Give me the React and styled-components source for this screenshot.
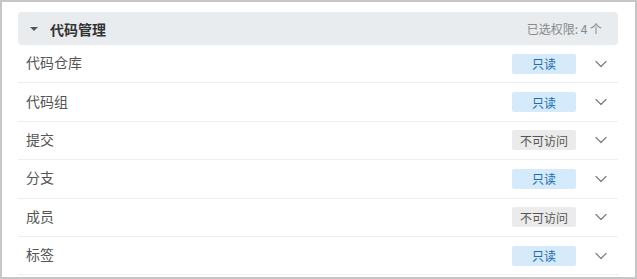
import React from 'react';
import styled, { createGlobalStyle } from 'styled-components';
import { ChevronDown } from 'lucide-react';

const GlobalStyle = createGlobalStyle`
	body {
		margin: 0;
		font-family: "Noto Sans CJK SC", "Liberation Sans", sans-serif;
	}
`

const Frame = styled.div`
	box-sizing: border-box;
	width: 637px;
	height: 279px;
	border: 2px solid #c6c6c6;
	padding: 10px 17px 0 16px;
	background: #fff;
	overflow: hidden;
`

const Header = styled.div`
	display: flex;
	align-items: center;
	height: 33px;
	padding: 0 16px 0 10px;
	background: #e9ecef;
	border-radius: 4px;
`

const Caret = styled.span`
	width: 0;
	height: 0;
	border-left: 4px solid transparent;
	border-right: 4px solid transparent;
	border-top: 4px solid #555;
	margin: 1px 12px 0 2px;
`

const Title = styled.h3`
	flex: 1;
	margin: 0;
	font-size: 14px;
	font-weight: 700;
	color: #333;
`

const Count = styled.span`
	font-size: 12px;
	color: #888;
`

const Row = styled.div`
	display: flex;
	align-items: center;
	height: 37.4px;
	padding: 0 7px 0 8px;
	border-bottom: 1px solid #eeeeee;

	&:first-of-type {
		height: 38px;
	}
`

const Name = styled.span`
	flex: 1;
	font-size: 14px;
	color: #555;
	margin-top: -3px;
`

const Badge = styled.span`
	box-sizing: border-box;
	width: 64px;
	height: 20px;
	display: flex;
	align-items: center;
	justify-content: center;
	font-size: 12px;
	border-radius: 2px;
	background: ${p => p.$blocked ? '#ebebeb' : '#d5eafb'};
	color: ${p => p.$blocked ? '#555' : '#1a6db0'};
`

const Toggle = styled.span`
	display: flex;
	margin-left: 15px;
	color: #808080;
`

const perms = [
	{ name: '代码仓库', blocked: false },
	{ name: '代码组', blocked: false },
	{ name: '提交', blocked: true },
	{ name: '分支', blocked: false },
	{ name: '成员', blocked: true },
	{ name: '标签', blocked: false },
]

const App = () => {
	return (
		<Frame>
			<GlobalStyle />
			<Header>
				<Caret />
				<Title>代码管理</Title>
				<Count>已选权限: 4 个</Count>
			</Header>
			{perms.map(p => (
				<Row key={p.name}>
					<Name>{p.name}</Name>
					<Badge $blocked={p.blocked}>{p.blocked ? '不可访问' : '只读'}</Badge>
					<Toggle><ChevronDown size={20} strokeWidth={1.5} /></Toggle>
				</Row>
			))}
		</Frame>
	)
}

export default App;
